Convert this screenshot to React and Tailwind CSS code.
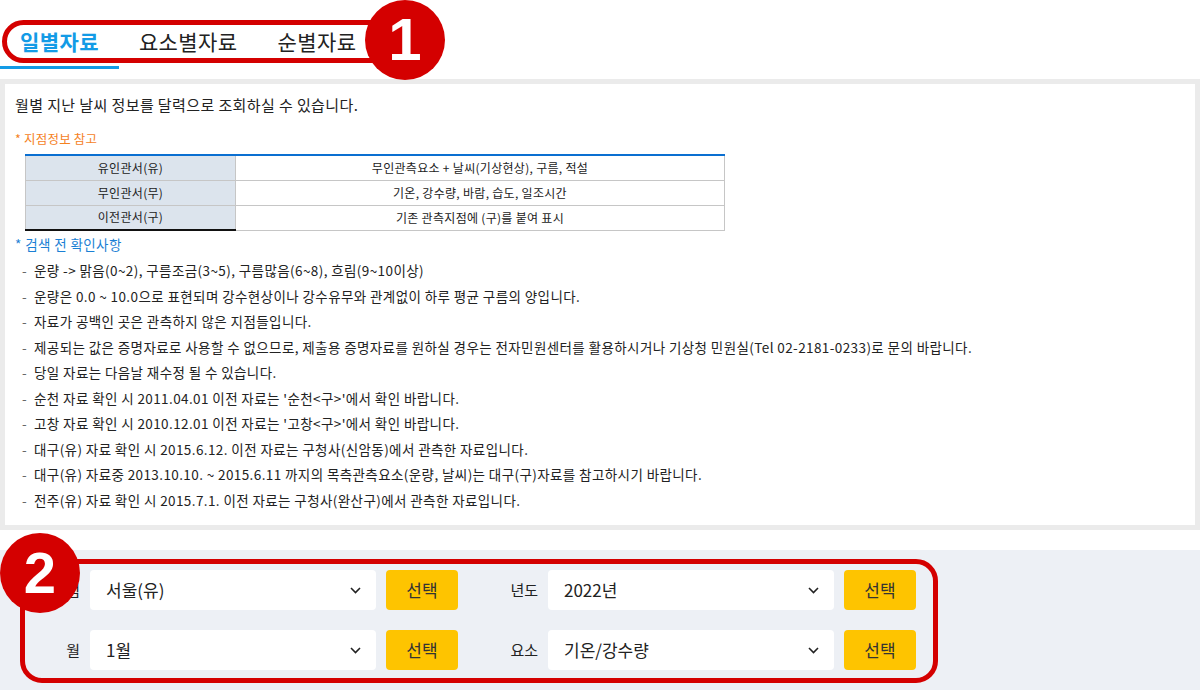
import React from 'react';

const notes = [
  '운량 -> 맑음(0~2), 구름조금(3~5), 구름많음(6~8), 흐림(9~10이상)',
  '운량은 0.0 ~ 10.0으로 표현되며 강수현상이나 강수유무와 관계없이 하루 평균 구름의 양입니다.',
  '자료가 공백인 곳은 관측하지 않은 지점들입니다.',
  '제공되는 값은 증명자료로 사용할 수 없으므로, 제출용 증명자료를 원하실 경우는 전자민원센터를 활용하시거나 기상청 민원실(Tel 02-2181-0233)로 문의 바랍니다.',
  '당일 자료는 다음날 재수정 될 수 있습니다.',
  "순천 자료 확인 시 2011.04.01 이전 자료는 '순천<구>'에서 확인 바랍니다.",
  "고창 자료 확인 시 2010.12.01 이전 자료는 '고창<구>'에서 확인 바랍니다.",
  '대구(유) 자료 확인 시 2015.6.12. 이전 자료는 구청사(신암동)에서 관측한 자료입니다.',
  '대구(유) 자료중 2013.10.10. ~ 2015.6.11 까지의 목측관측요소(운량, 날씨)는 대구(구)자료를 참고하시기 바랍니다.',
  '전주(유) 자료 확인 시 2015.7.1. 이전 자료는 구청사(완산구)에서 관측한 자료입니다.',
];

const stations = [
  ['유인관서(유)', '무인관측요소 + 날씨(기상현상), 구름, 적설'],
  ['무인관서(무)', '기온, 강수량, 바람, 습도, 일조시간'],
  ['이전관서(구)', '기존 관측지점에 (구)를 붙여 표시'],
];

const Chevron = () => (
  <svg width="11" height="7" viewBox="0 0 11 7" fill="none">
    <path d="M1 1l4.5 4.5L10 1" stroke="#222" strokeWidth="1.6" />
  </svg>
);

const Field = ({ label, value }) => (
  <div className="flex items-center h-10">
    <span className="w-[60px] text-right text-[15px] text-[#222]">{label}</span>
    <div className="ml-[10px] w-[286px] h-10 bg-white rounded-[4px] flex items-center justify-between pl-4 pr-[15px]">
      <span className="text-[17px] text-[#222]">{value}</span>
      <Chevron />
    </div>
    <button className="ml-[10px] w-[72px] h-10 bg-[#fec400] rounded-[4px] text-[17px] text-[#333]">
      선택
    </button>
  </div>
);

const App = () => {
  return (
    <div className="relative w-[1200px] h-[700px] bg-white overflow-hidden font-['Noto_Sans_CJK_KR','Noto_Sans',sans-serif]">
      {/* tabs */}
      <div className="flex h-[69px] items-end">
        <div className="px-5 pb-[11px] border-b-[3px] border-[#139be6] text-[21px] tracking-[0.4px] font-bold text-[#139be6] leading-[28px]">
          일별자료
        </div>
        <div className="px-5 pb-[14px] text-[21px] tracking-[0.4px] text-[#222] leading-[28px]">요소별자료</div>
        <div className="px-5 pb-[14px] text-[21px] tracking-[0.4px] text-[#222] leading-[28px]">순별자료</div>
      </div>

      {/* info box */}
      <div className="mt-[10px] h-[451px] border-[5px] border-[#ebebeb] pl-[10px] pt-[11px]">
        <p className="text-[15px] tracking-[0.4px] leading-5 text-[#222]">월별 지난 날씨 정보를 달력으로 조회하실 수 있습니다.</p>
        <p className="mt-4 text-[12.5px] tracking-[0.2px] leading-4 text-[#f5821f]">* 지점정보 참고</p>
        <table className="mt-[7px] ml-[10px] w-[700px] border-t-2 border-[#0a6fd1] text-[12px] tracking-[0.3px] text-[#222] border-collapse">
          <tbody>
            {stations.map(([k, v], i) => (
              <tr key={k} className="h-[25px]">
                <td
                  className={`w-[210px] bg-[#dce4ed] text-center border-l border-r border-[#c6c6c6] ${
                    i === 2 ? 'border-b-2 border-b-[#111]' : 'border-b'
                  }`}
                >
                  {k}
                </td>
                <td className="text-center border-b border-r border-[#c6c6c6]">{v}</td>
              </tr>
            ))}
          </tbody>
        </table>
        <p className="mt-[5px] text-[13.5px] tracking-[0.4px] leading-4 text-[#1a7fd4]">* 검색 전 확인사항</p>
        <ul className="mt-[6px]">
          {notes.map((n) => (
            <li key={n} className="flex text-[13.5px] tracking-[0.4px] leading-[25.5px] text-[#222]">
              <span className="w-[12px] pl-[7px] text-[#666]">-</span>
              <span className="pl-[7px]">{n}</span>
            </li>
          ))}
        </ul>
      </div>

      {/* search form */}
      <div className="mt-5 h-[140px] bg-[#edf0f5] pt-5 pl-5 flex flex-col gap-5">
        <div className="flex gap-5">
          <Field label="지점" value="서울(유)" />
          <Field label="년도" value="2022년" />
        </div>
        <div className="flex gap-5">
          <Field label="월" value="1월" />
          <Field label="요소" value="기온/강수량" />
        </div>
      </div>

      {/* annotation 1 */}
      <div className="absolute left-[2px] top-[20px] w-[400px] h-[43px] border-[5px] border-[#d40000] rounded-full" />
      <div className="absolute left-[365px] top-0 w-20 h-20 rounded-full bg-[#d40000] flex items-center justify-center text-white text-[60px] font-black font-['Liberation_Sans',Arial,sans-serif] leading-none">
        1
      </div>

      {/* annotation 2 */}
      <div className="absolute left-[20px] top-[559px] w-[918px] h-[124px] border-[5px] border-[#d40000] rounded-[22px]" />
      <div className="absolute left-0 top-[533px] w-20 h-20 rounded-full bg-[#d40000] flex items-center justify-center text-white text-[58px] font-black font-['Liberation_Sans',Arial,sans-serif] leading-none">
        2
      </div>
    </div>
  );
};

export default App;
